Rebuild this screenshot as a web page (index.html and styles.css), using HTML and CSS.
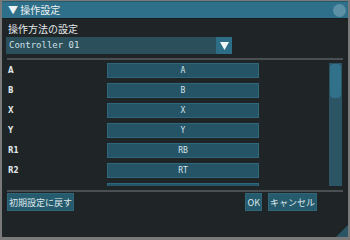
FILE: index.html
```html
<!DOCTYPE html>
<html lang="ja">

<head>
  <meta charset="UTF-8" />
  <meta name="viewport" content="width=device-width, initial-scale=1.0" />
  <title>操作設定</title>
  <link rel="stylesheet" href="styles.css">
</head>

<body>
  <main class="window">
    <header class="titlebar">
      <span class="titlebar-text">▼ 操作設定</span>
      <span class="titlebar-dot"></span>
    </header>

    <section class="content">
      <div class="section_label">操作方法の設定</div>
      <div class="dropdown">
        <span class="dropdown-value">Controller 01</span>
        <span class="dropdown-arrow">
          <svg width="9" height="8" viewBox="0 0 9 8">
            <path d="M0 0 H9 L4.5 8 Z" fill="#f2f6f7" />
          </svg>
        </span>
      </div>

      <hr class="separator" />

      <div class="binding_area">
        <ul class="binding_list">
          <li class="binding_row"><span class="binding_row-label">A</span><button class="binding_row-key">A</button></li>
          <li class="binding_row"><span class="binding_row-label">B</span><button class="binding_row-key">B</button></li>
          <li class="binding_row"><span class="binding_row-label">X</span><button class="binding_row-key">X</button></li>
          <li class="binding_row"><span class="binding_row-label">Y</span><button class="binding_row-key">Y</button></li>
          <li class="binding_row"><span class="binding_row-label">R1</span><button class="binding_row-key">RB</button></li>
          <li class="binding_row"><span class="binding_row-label">R2</span><button class="binding_row-key">RT</button></li>
          <!-- next row is scrolled past the edge, only its top shows -->
          <li class="binding_row"><span class="binding_row-label"></span><button class="binding_row-key"></button></li>
        </ul>
        <div class="scrollbar">
          <div class="scrollbar-thumb"></div>
        </div>
      </div>

      <hr class="separator" />

      <footer class="actions">
        <button class="action_button">初期設定に戻す</button>
        <span class="actions-spacer"></span>
        <button class="action_button">OK</button>
        <button class="action_button">キャンセル</button>
      </footer>
    </section>

    <span class="resize_grip"></span>
  </main>
</body>
</html>
```

FILE: styles.css
```css
html,
body {
  margin: 0;
  padding: 0;
  background: #777;
}

.window {
  box-sizing: border-box;
  position: relative;
  display: flex;
  flex-direction: column;
  width: 350px;
  height: 240px;
  border: solid 2px #7a7a7a;
  border-top-width: 1px;
  border-bottom-width: 3px;
  background: #1f2427;
  font-family: "Noto Sans CJK JP", "Noto Sans", sans-serif;
  color: #e4e9eb;
  overflow: hidden;
}

.titlebar {
  display: flex;
  align-items: center;
  justify-content: space-between;
  height: 16px;
  padding: 0 2px 0 6px;
  background: #2e6f89;
  border-top: solid 1px #24596d;
  border-bottom: solid 1px #1a1d1f;
}

.titlebar-text {
  font-size: 10px;
  line-height: 1;
  color: #eef3f5;
}

.titlebar-dot {
  width: 13px;
  height: 13px;
  border-radius: 50%;
  background: #5b90a5;
}

.content {
  display: flex;
  flex-direction: column;
  padding: 0 3px;
  flex: 1;
}

.section_label {
  margin: 3px 0 0 3px;
  height: 14px;
  font-size: 10px;
  line-height: 14px;
}

.dropdown {
  display: flex;
  align-items: stretch;
  width: 226px;
  height: 17px;
  margin: 1px 0 0 1px;
  background: #2c4f5c;
}

.dropdown-value {
  flex: 1;
  padding-left: 3px;
  font-family: "DejaVu Sans Mono", monospace;
  font-size: 9px;
  line-height: 17px;
  color: #cfe0e6;
}

.dropdown-arrow {
  display: flex;
  align-items: center;
  justify-content: center;
  width: 16px;
  background: #2d6d86;
}

.separator {
  height: 2px;
  margin: 4px 2px 0 2px;
  border: 0;
  background: #4a4f52;
}

.binding_area {
  display: flex;
  height: 123px;
  margin-top: 3px;
  overflow: hidden;
}

.binding_list {
  flex: 1;
  margin: 0;
  padding: 0;
  list-style: none;
}

.binding_row {
  display: flex;
  align-items: center;
  height: 15px;
  margin-bottom: 5px;
}

.binding_row-label {
  box-sizing: border-box;
  width: 102px;
  padding-left: 3px;
  font-family: "DejaVu Sans Condensed", "DejaVu Sans", sans-serif;
  font-size: 8px;
  font-weight: bold;
  color: #dfe5e8;
}

.binding_row-key {
  box-sizing: border-box;
  width: 152px;
  height: 15px;
  padding: 0;
  border: solid 1px #2f6679;
  background: #255467;
  font-family: "DejaVu Sans Mono", monospace;
  font-size: 8px;
  color: #d6e4e9;
}

.scrollbar {
  box-sizing: border-box;
  width: 13px;
  margin-right: 3px;
  padding: 1px;
  background: #2b5465;
}

.scrollbar-thumb {
  height: 34px;
  border-radius: 4px;
  background: #31728a;
}

.actions {
  display: flex;
  align-items: center;
  gap: 6px;
  margin-top: 1px;
  padding: 0 28px 0 2px;
}

.actions-spacer {
  flex: 1;
}

.action_button {
  box-sizing: border-box;
  height: 18px;
  padding: 0 1px;
  border: solid 1px #2f6679;
  background: #265a6d;
  font-family: "Noto Sans CJK JP", "Noto Sans", sans-serif;
  font-size: 9px;
  line-height: 1;
  color: #dbe7eb;
}

.resize_grip {
  position: absolute;
  right: 0;
  bottom: 0;
  width: 0;
  height: 0;
  border-left: solid 12px transparent;
  border-bottom: solid 12px #2b5465;
}
```
